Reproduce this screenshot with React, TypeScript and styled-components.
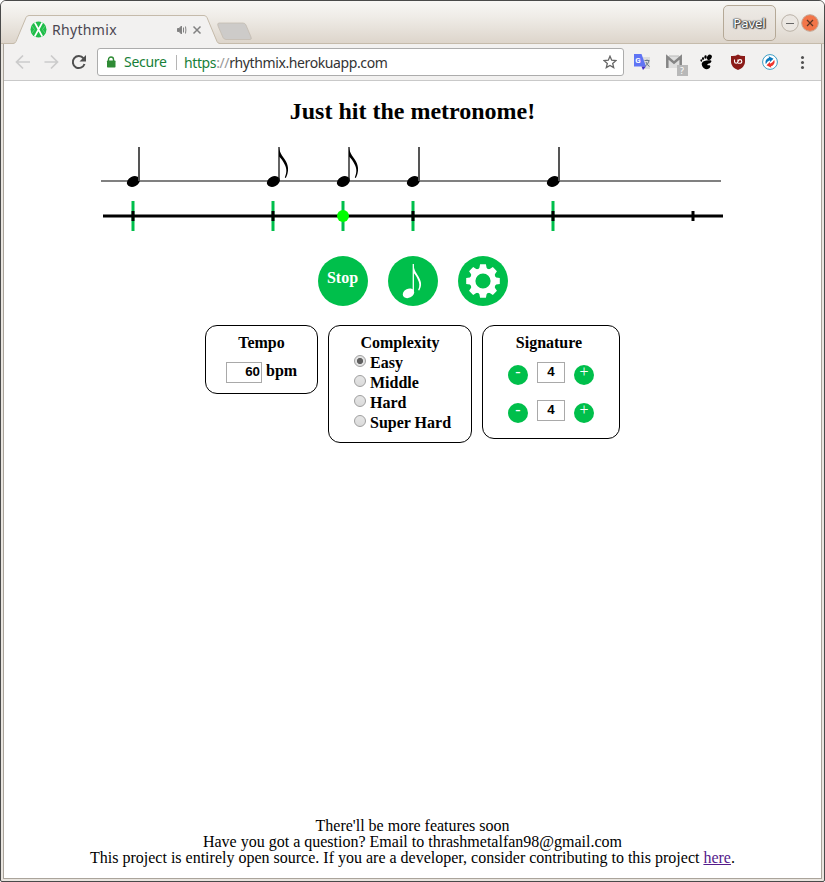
import React from 'react';
import styled, { createGlobalStyle } from 'styled-components';

const GREEN = '#00bf4b';
const SERIF = '"Liberation Serif", "Times New Roman", serif';
const CHROME = '"Noto Sans", "Open Sans", sans-serif';

const GlobalStyle = createGlobalStyle`
  * { box-sizing: border-box; }
  body { margin: 0; background: #fff; font: 16px ${SERIF}; color: #000; }
  svg { display: block; flex: none; }
`;

const Window = styled.div`
  width: 825px;
  height: 882px;
  display: flex;
  flex-direction: column;
  border: 1px solid #4a4a4a;
  border-radius: 6px 6px 2px 2px;
  background: #e9e5df;
  overflow: hidden;
`;
const TitleBar = styled.header`
  height: 43px;
  flex: none;
  display: flex;
  align-items: flex-end;
  padding-left: 12px;
  background: linear-gradient(#f8f7f5 0, #efece7 16px, #ddd5cb 42px);
  border-bottom: 1px solid #c5bbab;
`;
const Tab = styled.div`
  position: relative;
  width: 207px;
  height: 29px;
  margin-bottom: -1px;
  padding: 0 17px;
  display: flex;
  align-items: center;
  font: 14px/20px ${CHROME};
  color: #4a4650;
`;
const TabShape = styled.svg`
  position: absolute;
  left: 0;
  top: 0;
`;
const TabTitle = styled.span`
  position: relative;
  flex: 1;
  margin-left: 5px;
  letter-spacing: 0.32px;
`;
const TabIcon = styled.svg`
  position: relative;
`;
const NewTab = styled.svg`
  margin: 0 0 2px -4px;
`;
const WindowControls = styled.div`
  display: flex;
  align-items: center;
  align-self: flex-start;
  margin: 4px 4px 0 auto;
`;
const UserButton = styled.button`
  width: 53px;
  height: 36px;
  margin-right: 5px;
  padding: 0;
  border: 1px solid #b5a997;
  border-radius: 5px;
  background: linear-gradient(#edeae6, #e3dcd4);
  color: #fff;
  font: 13px ${CHROME};
  text-shadow: 0 0 1px #444, 0 0 2px #444, 1px 1px 1px #444, -1px 0 1px #555, 1px 0 1px #555;
`;

const Client = styled.div`
  flex: 1;
  min-height: 0;
  margin: 0 2px 2px;
  display: flex;
  flex-direction: column;
  border: 1px solid #aaa49b;
  border-top: 0;
  background: #fff;
`;
const Toolbar = styled.div`
  height: 37px;
  flex: none;
  display: flex;
  align-items: center;
  background: #f2f1f0;
  border-bottom: 1px solid #c9c9c9;
  padding-left: 11px;
`;
const AddressBar = styled.div`
  width: 527px;
  height: 28px;
  margin-left: 10px;
  padding: 0 6px 0 8px;
  display: flex;
  align-items: center;
  border: 1px solid #acacac;
  border-radius: 3px;
  background: #fff;
  font: 14px/20px ${CHROME};
  color: #333;
`;
const Secure = styled.span`
  width: 52px;
  margin-left: 8px;
  letter-spacing: -0.28px;
  color: #188038;
`;
const Url = styled.span`
  flex: 1;
  padding-left: 7px;
  border-left: 1px solid #b5b5b5;
  line-height: 15px;
  letter-spacing: -0.39px;
`;
const Scheme = styled.span<{ $muted?: boolean }>`
  color: ${(p) => (p.$muted ? '#999' : '#188038')};
`;
const Extensions = styled.div`
  display: flex;
  align-items: center;
  margin-left: 9px;
`;

const Page = styled.main`
  flex: 1;
  display: flex;
  flex-direction: column;
  align-items: center;
`;
const Heading = styled.h1`
  margin: 16px 0 0;
  font: bold 24px/28px ${SERIF};
`;
const Staff = styled.svg`
  margin-top: 20px;
`;
const Timeline = styled.svg`
  margin-top: 10px;
`;
const Actions = styled.div`
  display: flex;
  gap: 20px;
  margin: 24px 0 19px;
`;
const RoundButton = styled.button`
  width: 50px;
  height: 50px;
  padding: 0;
  border: 0;
  border-radius: 50%;
  background: ${GREEN};
  color: #fff;
  font: bold 16px/18px ${SERIF};
  display: flex;
  align-items: center;
  justify-content: center;
`;
const StopLabel = styled.span`
  padding: 0 0 7px;
`;
const Panels = styled.div`
  display: flex;
  align-items: flex-start;
  gap: 10px;
`;
const Panel = styled.section<{ $w: number; $h: number }>`
  width: ${(p) => p.$w}px;
  height: ${(p) => p.$h}px;
  padding-top: 8px;
  border: 1px solid #000;
  border-radius: 12px;
  font-weight: bold;
  display: flex;
  flex-direction: column;
  line-height: 18px;
`;
const PanelTitle = styled.h2<{ $inset?: number }>`
  margin: 0;
  padding-right: ${(p) => p.$inset ?? 0}px;
  font: bold 16px/18px ${SERIF};
  text-align: center;
`;
const TempoRow = styled.label`
  display: flex;
  gap: 4px;
  margin: 10px 0 0 20px;
`;
const NumberInput = styled.input<{ $center?: boolean }>`
  width: ${(p) => (p.$center ? 28 : 36)}px;
  height: 21px;
  padding: 0 1px 2px;
  border: 1px solid #a9a9a9;
  border-radius: 0;
  outline: 0;
  background: #fff;
  color: #000;
  font: bold 13.33px "Liberation Sans", Arial, sans-serif;
  text-align: ${(p) => (p.$center ? 'center' : 'right')};
`;
const Choice = styled.label`
  height: 20px;
  display: flex;
  align-items: flex-start;
  gap: 4px;
  margin-left: 25px;
  line-height: 22px;
`;
const Radio = styled.input`
  appearance: none;
  width: 12px;
  height: 12px;
  margin: 3px 0 0;
  border: 1px solid #a0a0a0;
  border-radius: 50%;
  background: linear-gradient(#e6e6e6, #dadada);
  &:checked {
    background: radial-gradient(circle, #5f5f5f 2.7px, #e2e2e2 3.5px);
  }
`;
const Stepper = styled.div`
  display: flex;
  align-items: flex-start;
  justify-content: center;
  gap: 9px;
  margin: 10px 0 5px;
`;
const StepButton = styled.button`
  width: 20px;
  height: 20px;
  margin-top: 3px;
  padding: 0 0 7px;
  border: 0;
  border-radius: 50%;
  background: ${GREEN};
  color: #fff;
  font: 16px/13px ${SERIF};
`;
const Footer = styled.footer`
  margin: auto 0 12px;
  text-align: center;
  line-height: 16px;
`;
const FooterLink = styled.a`
  color: #551a8b;
`;

const notes = [
  { x: 133 },
  { x: 273, flag: true },
  { x: 343, flag: true },
  { x: 413 },
  { x: 553 },
];
const beats = [133, 273, 413, 553, 693];

function Note({ x, flag }: { x: number; flag?: boolean }) {
  return (
    <g transform={`translate(${x} 0)`}>
      <ellipse cx="0.4" cy="181.5" rx="6.8" ry="5" transform="rotate(-26 0.4 181.5)" />
      <path d="M6 147V181" stroke={flag ? '#111' : '#555'} strokeWidth={flag ? 1.3 : 2} />
      {flag && (
        <path d="M6 147.500C6.800 154 10.500 157 13 161.500C16 167 15.600 172.500 12.800 178L11.800 177.400C14 172 13.800 168.500 11.700 164.500C10 161 8 158 6 156.500Z" />
      )}
    </g>
  );
}

function Music() {
  return (
    <>
      <Staff width="625" height="45" viewBox="100 145 625 45">
        <path d="M101 181H721" stroke="#808080" strokeWidth="2" />
        {notes.map((n) => <Note key={n.x} {...n} />)}
      </Staff>
      <Timeline width="625" height="32" viewBox="100 200 625 32">
        {notes.map((n) => (
          <path key={n.x} d={`M${n.x} 201v30`} stroke={GREEN} strokeWidth="3" />
        ))}
        <path d="M103 216H723" stroke="#000" strokeWidth="3" />
        {beats.map((x) => <path key={x} d={`M${x} 211v10`} stroke="#000" strokeWidth="3" />)}
        <circle cx="343" cy="216" r="6" fill="#0f0" />
      </Timeline>
    </>
  );
}

function GearIcon() {
  const teeth = [0, 45, 90, 135, 180, 225, 270, 315];
  return (
    <svg width="34" height="34" viewBox="-17 -17 34 34">
      <circle r="10.300" fill="none" stroke="#fff" strokeWidth="5.400" />
      {teeth.map((a) => (
        <path key={a} d="M-5.200-11L-3.600-13.200-2.900-16.800H2.900L3.600-13.200 5.200-11Z" fill="#fff" transform={`rotate(${a})`} />
      ))}
    </svg>
  );
}

function EighthIcon() {
  return (
    <svg width="50" height="50" viewBox="0 0 50 50" fill="#fff">
      <ellipse cx="20.500" cy="37.300" rx="6" ry="4.500" transform="rotate(-26 20.500 37.300)" />
      <path d="M25.300 8V37" stroke="#fff" strokeWidth="1.300" />
      <path d="M25.500 8.500C26 15 29 17.500 31 21.500C34 27 33.500 30 31.200 34.600L30.100 34C32 30 31.600 27 29.800 23.500C28.500 20.500 27 18 25.500 17Z" />
    </svg>
  );
}

function Browser() {
  return (
    <TitleBar>
      <Tab>
        <TabShape width="207" height="29" viewBox="0 0 207 29">
          <path d="M0 29L2 28 13.500 2.500Q14.500 1 16 1H191Q193 1 194 3L204 27Q205 28.500 207 29Z" fill="#f2f1f0" />
          <path d="M0 28.500Q2 28.500 3 26.500L13 2.500Q14 .5 16 .5H191Q193 .5 194 2.500L204 26.500Q205 28.500 207 28.500" fill="none" stroke="#c5bbab" />
        </TabShape>
        <TabIcon width="17" height="17" viewBox="0 0 17 17">
          <circle cx="8.500" cy="8.500" r="8" fill="#20bd4a" />
          <path d="M4.700 1.500l7.600 14M12.300 1.500l-7.600 14" stroke="#fff" strokeWidth="1.600" />
          <path d="M2 5l2.500 3.500L2 12M15 5l-2.500 3.500L15 12" fill="none" stroke="#75d98f" strokeWidth=".7" />
        </TabIcon>
        <TabTitle>Rhythmix</TabTitle>
        <TabIcon width="27" height="12" viewBox="0 0 27 12" fill="none" stroke="#828282">
          <path d="M1.500 4.500h1.500l2.500-2.500v8L3 7.500H1.500z" fill="#828282" />
          <path d="M7.500 3.500v5M9.500 2.500q.8 3.500 0 7" />
          <path d="M17.500 2.500l7 7M24.500 2.500l-7 7" strokeWidth="1.500" />
        </TabIcon>
      </Tab>
      <NewTab width="37" height="19" viewBox="0 0 37 19">
        <path d="M3 1H27Q29 1 30 3L35 15Q36 17.500 34 17.500H10Q8 17.500 7 15.500L2 4Q1 1 3 1Z" fill="#cdcbc9" stroke="#c2b9ac" strokeWidth=".7" />
      </NewTab>
      <WindowControls>
        <UserButton>Pavel</UserButton>
        <svg width="39" height="20" viewBox="0 0 39 20">
          <circle cx="9" cy="10" r="8.300" fill="#ebe7e2" stroke="#bab2a7" />
          <path d="M5 10.500h8" stroke="#666" strokeWidth="1.100" />
          <circle cx="29" cy="10" r="8.300" fill="#f27549" stroke="#c5a795" />
          <path d="M26 7l6 6M32 7l-6 6" stroke="#5c3524" strokeWidth="1.200" />
        </svg>
      </WindowControls>
    </TitleBar>
  );
}

function Nav() {
  return (
    <Toolbar>
      <svg width="72" height="18" viewBox="15 53 72 18" fill="none" strokeWidth="2">
        <path d="M30 62H17M23 55.500L16.500 62l6.500 6.500M44.500 62h13M51 55.500l6.500 6.500-6.500 6.500" stroke="#cbcbcb" strokeWidth="1.700" />
        <path d="M83.500 58.300A6 6 0 1 0 84.500 64" stroke="#4f4f4f" />
        <path d="M86 55v6.500h-6.500z" fill="#4f4f4f" />
      </svg>
      <AddressBar>
        <svg width="10" height="12" viewBox="0 0 10 12">
          <path d="M2.500 5V3.500a2.500 2.500 0 0 1 5 0V5" fill="none" stroke="#2f8b35" strokeWidth="1.400" />
          <rect x="1" y="4.500" width="8.500" height="7" rx=".7" fill="#2f8b35" />
        </svg>
        <Secure>Secure</Secure>
        <Url><Scheme>https</Scheme><Scheme $muted>://</Scheme>rhythmix.herokuapp.com</Url>
        <svg width="14" height="14" viewBox="0 0 14 14">
          <path d="M7 1.200l1.700 4 4.300.4-3.300 2.800 1 4.200L7 10.400l-3.700 2.200 1-4.200L1 5.600l4.300-.4z" fill="none" stroke="#666" strokeWidth="1.300" />
        </svg>
      </AddressBar>
      <Extensions>
        <svg width="178" height="28" viewBox="633 48 178 28">
          <path d="M641 57h9v12h-6z" fill="#dcdcdc" />
          <path d="M634 54h7.500l4.500 12.500h-12z" fill="#5f74f4" />
          <path d="M641.500 66.500h4.500l-3 3.500z" fill="#4230c5" />
          <text x="635.300" y="63.300" fontFamily="Roboto" fontSize="8" fontWeight="700" fill="#fff">G</text>
          <path d="M644.500 60.500h5m-2.500-1v1.500m2 0q-1 3-3.500 5m.5-4q1 3 3.500 4.500" fill="none" stroke="#687985" />
          <path d="M666 56h16v12h-16z" fill="#dedede" />
          <path d="M667.300 68V57l6.700 5.700 6.700-5.700v11" fill="none" stroke="#858585" strokeWidth="2.500" />
          <path d="M669 56h10" stroke="#b9b9b9" />
          <rect x="677" y="65" width="11" height="11" fill="#b8b8b8" />
          <text x="680" y="74" fontFamily="Noto Sans" fontSize="9" fill="#fff">?</text>
          <ellipse cx="709.300" cy="57.300" rx="2.200" ry="2.900" transform="rotate(38 709.300 57.300)" />
          <ellipse cx="705.500" cy="57" rx="1.200" ry="1.700" transform="rotate(10 705.500 57)" />
          <ellipse cx="703" cy="58.400" rx="1" ry="1.500" />
          <ellipse cx="701.200" cy="60.500" rx=".9" ry="1.200" transform="rotate(-10 701 60)" />
          <path d="M701.800 63.200C703 60.500 707 60 710.300 60.300C712.300 60.600 711.500 63 709 63.500C707.500 63.800 706.900 64.600 707.600 65.300C709 65 710.700 65.200 710.300 66.800C709.600 69.200 706 70 704 68.200C702.500 66.900 701.400 65 701.800 63.200Z" />
          <path d="M738 54.500q3 2 7 1.500v6q0 5-7 8-7-3-7-8v-6q4 .5 7-1.500z" fill="#8b1b18" />
          <path d="M734.500 59.500v2q0 1.700 1.700 1.700t1.700-1.700v-2m0 3.700h1.700q2.200 0 2.200-1.800t-1.800-1.800q-1.600 0-1.600 1.800" fill="none" stroke="#fff" strokeWidth="1.100" />
          <circle cx="770" cy="62" r="7.400" fill="#fff" stroke="#3b9cc4" />
          <path d="M765.800 64.300A4.800 4.800 0 0 1 769 57.700l-.3-1.500 4.800 2.500-3.400 3.300-.4-1.700q-2.500.8-3.900 4z" fill="#0a78bd" />
          <path d="M774.200 59.700A4.800 4.800 0 0 1 771 66.300l.3 1.500-4.800-2.500 3.400-3.300.4 1.700q2.500-.8 3.900-4z" fill="#ef362f" />
          <g fill="#505050"><circle cx="802.500" cy="57.500" r="1.500" /><circle cx="802.500" cy="62.500" r="1.500" /><circle cx="802.500" cy="67.500" r="1.500" /></g>
        </svg>
      </Extensions>
    </Toolbar>
  );
}

export default function App() {
  return (
    <>
      <GlobalStyle />
      <Window>
        <Browser />
        <Client>
          <Nav />
          <Page>
            <Heading>Just hit the metronome!</Heading>
            <Music />
            <Actions>
              <RoundButton><StopLabel>Stop</StopLabel></RoundButton>
              <RoundButton aria-label="Notes"><EighthIcon /></RoundButton>
              <RoundButton aria-label="Settings"><GearIcon /></RoundButton>
            </Actions>
            <Panels>
              <Panel $w={113} $h={69}>
                <PanelTitle>Tempo</PanelTitle>
                <TempoRow><NumberInput defaultValue="60" />bpm</TempoRow>
              </Panel>
              <Panel $w={144} $h={118}>
                <PanelTitle>Complexity</PanelTitle>
                {['Easy', 'Middle', 'Hard', 'Super Hard'].map((level, i) => (
                  <Choice key={level}>
                    <Radio type="radio" name="complexity" defaultChecked={i === 0} />
                    {level}
                  </Choice>
                ))}
              </Panel>
              <Panel $w={138} $h={114}>
                <PanelTitle $inset={4}>Signature</PanelTitle>
                {['beats', 'unit'].map((part) => (
                  <Stepper key={part}>
                    <StepButton>-</StepButton>
                    <NumberInput $center defaultValue="4" />
                    <StepButton>+</StepButton>
                  </Stepper>
                ))}
              </Panel>
            </Panels>
            <Footer>
              There'll be more features soon<br />
              Have you got a question? Email to thrashmetalfan98@gmail.com<br />
              This project is entirely open source. If you are a developer, consider contributing to this project{' '}
              <FooterLink href="#">here</FooterLink>.
            </Footer>
          </Page>
        </Client>
      </Window>
    </>
  );
}
